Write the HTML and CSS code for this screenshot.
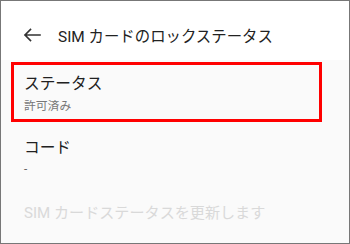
FILE: index.html
```html
<!DOCTYPE html>
<html lang="ja">
<head>
<meta charset="utf-8">
<link rel="stylesheet" href="styles.css">
</head>
<body>
<div class="frame">
  <header class="appbar">
    <svg class="back" width="18" height="14" viewBox="0 0 18 14" aria-hidden="true">
      <path d="M17 7H2M7.5 1.5L2 7l5.5 5.5" fill="none" stroke="#333" stroke-width="1.6" stroke-linecap="square"/>
    </svg>
    <span class="title">SIM カードのロックステータス</span>
  </header>
  <main class="list">
    <div class="item highlighted">
      <div class="primary">ステータス</div>
      <div class="secondary">許可済み</div>
    </div>
    <div class="item plain">
      <div class="primary">コード</div>
      <div class="secondary dash">-</div>
    </div>
    <div class="item plain action">
      <div class="primary disabled">SIM カードステータスを更新します</div>
    </div>
  </main>
</div>
</body>
</html>
```

FILE: styles.css
```css
* { box-sizing: border-box; }
html, body { margin: 0; padding: 0; }
body {
  font-family: Roboto, "Noto Sans CJK JP", sans-serif;
  background: #fafafa;
}
.frame {
  width: 350px;
  height: 244px;
  border: 1px solid #777;
  background: #fafafa;
  display: flex;
  flex-direction: column;
  overflow: hidden;
}
.appbar {
  height: 59px;
  background: #fff;
  display: flex;
  align-items: center;
  padding-left: 22px;
  padding-top: 8px;
}
.back { flex: none; }
.title {
  margin-left: 17px;
  font-size: 15.4px;
  color: #222;
}
.list {
  flex: 1;
  padding-top: 2px;
}
.item { padding-left: 23px; }
.highlighted {
  margin: 0 27px 0 10px;
  border: 3px solid #f00;
  padding: 8px 0 0 10px;
  height: 60px;
}
.primary {
  font-size: 15.7px;
  line-height: 22px;
  color: #212121;
}
.secondary {
  font-size: 11.8px;
  line-height: 16px;
  color: #777;
  margin-top: 3px;
}
.plain.item { padding-top: 15px; }
.dash { color: #555; margin-top: 2px; }
.action { padding-top: 25px !important; }
.disabled { color: #d9d9d9; font-size: 15.1px; }
```
